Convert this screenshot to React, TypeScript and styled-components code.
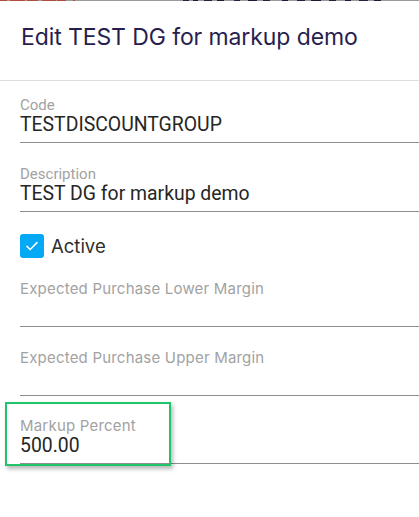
import React from "react";
import styled, { createGlobalStyle } from "styled-components";

const Global = createGlobalStyle`
  html, body { margin: 0; padding: 0; background: #ffffff; }
  body { width: 419px; height: 517px; overflow: hidden; }
`;

const Page = styled.div`
  width: 419px;
  height: 517px;
  display: flex;
  flex-direction: column;
  background: #ffffff;
  overflow: hidden;
`;

const Peek = styled.div`
  display: flex;
  height: 1px;
  flex: none;
  background: #9a9a9a;
`;

const PeekSeg = styled.span<{ $c: string }>`
  display: block;
  height: 1px;
  flex: none;
  background: ${(p) => p.$c};
`;

const Header = styled.div`
  height: 80px;
  flex: none;
  box-sizing: border-box;
  padding: 21px 0 0 21px;
  border-bottom: 1px solid #dedede;
`;

const Title = styled.h1`
  margin: 0;
  font-family: Inter, "Open Sans", sans-serif;
  font-weight: 400;
  font-size: 23px;
  line-height: 30px;
  color: #271e4e;
  letter-spacing: -0.1px;
`;

const Form = styled.div`
  display: flex;
  flex-direction: column;
  padding-left: 20px;
  position: relative;
`;

const Field = styled.div<{ $top: number }>`
  display: flex;
  flex-direction: column;
  padding-top: ${(p) => p.$top}px;
  padding-bottom: 6px;
  border-bottom: 1px solid #8e8e8e;
  position: relative;
`;

const Label = styled.label<{ $alt?: boolean }>`
  font-family: ${(p) => (p.$alt ? 'Inter, "Open Sans", sans-serif' : 'Roboto, "Liberation Sans", sans-serif')};
  font-size: 15px;
  letter-spacing: ${(p) => (p.$alt ? "0.2px" : "0")};
  line-height: 18px;
  color: #a2a2a2;
`;

const Value = styled.div`
  font-family: Roboto, "Liberation Sans", sans-serif;
  font-size: 19.4px;
  line-height: 22px;
  height: 22px;
  color: #262626;
`;

const CheckRow = styled.div`
  display: flex;
  align-items: center;
  gap: 7px;
  padding: 22px 0 0 0;
  height: 24px;
`;

const Box = styled.span`
  width: 24px;
  height: 24px;
  border-radius: 3px;
  background: #03a9f4;
  display: flex;
  align-items: center;
  justify-content: center;
`;

const CheckText = styled.span`
  font-family: Inter, "Open Sans", sans-serif;
  font-size: 18.5px;
  color: #2e2e2e;
`;

const Highlight = styled.div`
  position: absolute;
  left: -15px;
  top: 6px;
  width: 162px;
  height: 60px;
  border: 2px solid #20c46b;
  box-shadow: 2px 3px 4px rgba(0, 0, 0, 0.28);
  pointer-events: none;
`;

const peek: [number, string][] = [
  [7, "#b24a3a"], [3, "#9a9a9a"], [15, "#b24a3a"], [2, "#9a9a9a"], [11, "#b24a3a"],
  [4, "#9a9a9a"], [14, "#b24a3a"], [1, "#9a9a9a"], [9, "#b24a3a"], [7, "#9a9a9a"],
  [2, "#b24a3a"], [108, "#9a9a9a"], [6, "#2a1f40"], [4, "#9a9a9a"], [5, "#1d1a3a"],
  [6, "#9a9a9a"], [8, "#2a1f40"], [5, "#9a9a9a"], [7, "#1d1a3a"], [10, "#9a9a9a"],
  [6, "#2a1f40"], [8, "#9a9a9a"], [9, "#1d1a3a"], [6, "#9a9a9a"], [7, "#2a1f40"],
  [12, "#9a9a9a"], [6, "#1d1a3a"], [9, "#9a9a9a"], [8, "#2a1f40"], [6, "#9a9a9a"],
  [10, "#1d1a3a"], [8, "#9a9a9a"], [7, "#2a1f40"], [9, "#9a9a9a"], [6, "#1d1a3a"],
  [8, "#9a9a9a"], [9, "#2a1f40"], [6, "#9a9a9a"], [7, "#1d1a3a"],
];

export default function App() {
  return (
    <Page>
      <Global />
      <Peek>
        {peek.map(([w, c], i) => (
          <PeekSeg key={i} $c={c} style={{ width: w }} />
        ))}
      </Peek>
      <Header>
        <Title>Edit TEST DG for markup demo</Title>
      </Header>
      <Form>
        <Field $top={15}>
          <Label>Code</Label>
          <Value>TESTDISCOUNTGROUP</Value>
        </Field>
        <Field $top={22}>
          <Label>Description</Label>
          <Value>TEST DG for markup demo</Value>
        </Field>
        <CheckRow>
          <Box>
            <svg width="16" height="16" viewBox="0 0 24 24" fill="none">
              <path d="M4.5 12.5l4.8 4.8L19.5 7" stroke="#fff" strokeWidth="2.4" strokeLinecap="round" strokeLinejoin="round" />
            </svg>
          </Box>
          <CheckText>Active</CheckText>
        </CheckRow>
        <Field $top={22}>
          <Label $alt>Expected Purchase Lower Margin</Label>
          <Value />
        </Field>
        <Field $top={22}>
          <Label $alt>Expected Purchase Upper Margin</Label>
          <Value />
        </Field>
        <Field $top={21}>
          <Label $alt>Markup Percent</Label>
          <Value>500.00</Value>
          <Highlight />
        </Field>
      </Form>
    </Page>
  );
}
